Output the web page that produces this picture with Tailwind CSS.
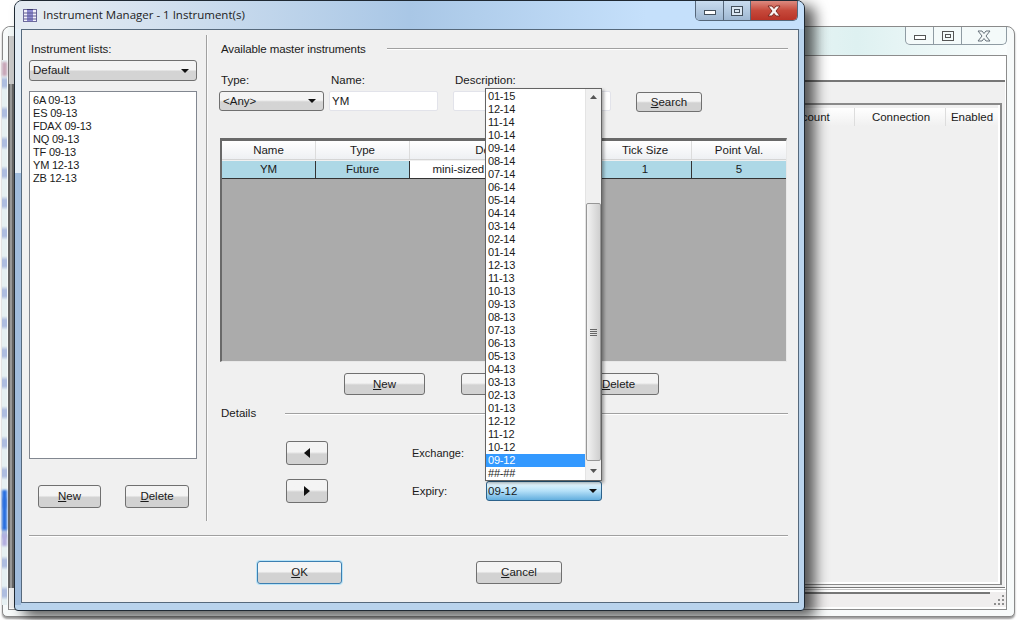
<!DOCTYPE html>
<html lang="en">
<head>
  <meta charset="UTF-8" />
  <title>Instrument Manager - 1 Instrument(s)</title>
  <script src="https://cdn.jsdelivr.net/npm/@tailwindcss/browser@4"></script>
</head>
<body class="relative w-[1017px] h-[620px] overflow-hidden bg-white font-['Liberation_Sans',sans-serif] text-[11.5px] leading-[13px] text-[#1a1a1a]">

  <!-- window behind -->
  <div class="absolute left-[2px] top-[26px] w-[1013px] h-[591px] rounded-t-[8px] rounded-b-[5px] border border-[#8a8a8a] bg-[#f7fafa] pl-[5px] pr-[7px] pb-[6px] flex flex-col shadow-[0_2px_2px_rgba(0,0,0,0.4)]">
    <div class="h-[28px] flex justify-end shrink-0 bg-gradient-to-r from-[#f3f8f8] from-70% via-[#def1f1] via-85% to-[#fafdfd]">
      <div class="h-[18px] w-[102px] flex rounded-b-[5px] border border-t-0 border-[#8f9ba3] bg-[#f4fafa]">
        <div class="w-[28px] border-r border-[#8f9ba3] flex items-center justify-center"><div class="w-[12px] h-[5px] mt-[3px] border border-[#555] bg-white"></div></div>
        <div class="w-[28px] border-r border-[#8f9ba3] flex items-center justify-center"><div class="w-[12px] h-[10px] border border-[#555] flex items-center justify-center"><div class="w-[6px] h-[4px] border border-[#555]"></div></div></div>
        <div class="flex-1 flex items-center justify-center">
          <svg width="16" height="12" viewBox="0 0 16 12"><path d="M2 1h4l2 2.5L10 1h4l-4 5 4 5h-4L8 8.500 6 11H2l4-5z" fill="#f4f8f8" stroke="#66717a" stroke-width="1"/></svg>
        </div>
      </div>
    </div>
    <div class="flex-1 border border-[#8c8c8c] bg-white flex flex-col">
      <div class="h-[24px] shrink-0"></div>
      <div class="h-[508px] shrink-0 mr-[1px] border-t-2 border-b border-[#777] bg-[#f0f0f0] pt-[21px] pr-[3px] pl-[3px]">
        <div class="h-[482px] border-t-2 border-b border-r-2 border-[#8a8a8a] bg-[#f0f0f0]">
          <div class="h-full border-r-2 border-b-2 border-white">
            <div class="h-[21px] flex justify-end pt-[3px]">
              <div class="w-[97px] h-[18px] pl-[6px] flex items-center justify-center bg-gradient-to-b from-white to-[#f0f0f0] border-r border-[#ddd]">Account</div>
              <div class="w-[91px] h-[18px] pl-[2px] flex items-center justify-center bg-gradient-to-b from-white to-[#f0f0f0] border-r border-[#ddd]">Connection</div>
              <div class="w-[52px] h-[18px] flex items-center justify-center bg-gradient-to-b from-white to-[#f0f0f0]">Enabled</div>
            </div>
          </div>
        </div>
      </div>
      <!-- status bar -->
      <div class="mt-[1px] h-[2px] border-t border-[#c4c4c4]"></div>
      <div class="mt-[1px] flex h-[15px]">
        <div class="flex-1 border-t-2 border-[#777] bg-[#f0eeee]"></div>
        <div class="w-[16px] bg-[#f0eeee] relative">
          <svg class="absolute right-[1px] bottom-[1px]" width="12" height="12" viewBox="0 0 12 12" fill="#8e8e8e"><rect x="9" y="1" width="2" height="2"/><rect x="5" y="5" width="2" height="2"/><rect x="9" y="5" width="2" height="2"/><rect x="1" y="9" width="2" height="2"/><rect x="5" y="9" width="2" height="2"/><rect x="9" y="9" width="2" height="2"/></svg>
        </div>
      </div>
    </div>
  </div>

  <!-- what shows of that window's left edge -->
  <div class="absolute left-[2px] top-[60px] w-[5px] h-[545px] bg-[repeating-linear-gradient(180deg,#e6f0f2_0px,#e6f0f2_16px,#aebddf_20px,#aebddf_26px,#e6f0f2_30px)]"></div>
  <div class="absolute left-[2px] top-[62px] w-[5px] h-[14px] bg-[#c9a7b8] blur-[1px]"></div>
  <div class="absolute left-[2px] top-[490px] w-[5px] h-[40px] bg-[#2a6fe0] blur-[1px]"></div>
  <div class="absolute left-[2px] top-[534px] w-[5px] h-[12px] bg-[#b3aee0] blur-[1px]"></div>
  <div class="absolute left-[8px] top-[36px] w-[6px] h-[48px] border-l border-[#777] bg-[#cbcbcb]"></div>
  <div class="absolute left-[8px] top-[84px] w-[6px] h-[504px] border-x-2 border-[#666] bg-[#9a9a9a]"></div>
  <div class="absolute left-[8px] top-[588px] w-[6px] h-[20px] border-l border-[#888] bg-[#efefef]"></div>

  <!-- main window -->
  <div class="absolute left-[14px] top-0 w-[791px] h-[611px] rounded-t-[8px] rounded-b-[4px] border border-[#1f2933] bg-[#b9d3ec] px-[6px] pb-[6px] flex flex-col shadow-[10px_6px_14px_rgba(0,0,0,0.65)]">
    <div class="absolute left-0 top-[28px] w-[6px] h-[144px] bg-[#e4eef7]"></div>
    <div class="absolute left-0 top-[172px] w-[6px] h-[432px] bg-[#9fbbdc]"></div>

    <!-- title bar -->
    <div class="h-[28px] -mx-[6px] px-[8px] shrink-0 rounded-t-[7px] flex items-start bg-gradient-to-r from-[#e4ebf2] from-5% via-[#a9c7e6] via-50% to-[#c5e0fb] to-80%">
      <svg class="mt-[7px] shrink-0" width="15" height="15" viewBox="0 0 15 15">
        <rect x="0.500" y="1.500" width="13" height="12" fill="#f3f1fa" stroke="#6c6a9c"/>
        <rect x="4" y="2" width="6" height="11" fill="#8d8ad0"/>
        <path d="M1 5h13M1 8h13M1 11h13" stroke="#5a588f" stroke-width="1"/>
        <path d="M4 1.500h6" stroke="#3c3a70"/>
      </svg>
      <span class="ml-[5px] mt-[6px] font-['Open_Sans',sans-serif] text-[11.5px] leading-[16px] text-[#222]">Instrument Manager - 1 Instrument(s)</span>
      <div class="ml-auto mr-[-2px] h-[20px] w-[103px] flex rounded-b-[5px] border border-t-0 border-[#56677a] overflow-hidden">
        <div class="w-[28px] border-r border-[#56677a] bg-gradient-to-b from-[#c9dcef] to-[#9fb8d2] flex items-center justify-center"><div class="w-[12px] h-[5px] mt-[3px] border border-[#44505c] bg-white"></div></div>
        <div class="w-[27px] border-r border-[#56677a] bg-gradient-to-b from-[#c9dcef] to-[#9fb8d2] flex items-center justify-center"><div class="w-[12px] h-[10px] border border-[#44505c] flex items-center justify-center bg-[#dbe7f2]"><div class="w-[6px] h-[4px] border border-[#44505c]"></div></div></div>
        <div class="flex-1 bg-gradient-to-b from-[#dc8a80] via-[#c6493b] to-[#b93327] flex items-center justify-center">
          <svg width="16" height="12" viewBox="0 0 16 12"><path d="M2 1h4l2 2.500L10 1h4l-4 5 4 5h-4L8 8.500 6 11H2l4-5z" fill="#f8f4f2" stroke="#7c2a22" stroke-width="1"/></svg>
        </div>
      </div>
    </div>

    <!-- client area -->
    <div class="relative w-[778px] h-[574px] shrink-0 border border-[#56697c] bg-[#f0f0f0]">

      <div class="flex h-[491px] pt-[5px]">
        <!-- instrument lists -->
        <div class="w-[168px] ml-[7px] pt-[7px] shrink-0">
          <div class="h-[14px] leading-[14px] ml-[2px]">Instrument lists:</div>
          <div class="mt-[4px] h-[21px] pl-[3px] pr-[7px] flex items-center justify-between border border-[#707070] rounded-[3px] bg-gradient-to-b from-[#f4f4f4] from-45% to-[#d4d4d4] to-55%">
            <span>Default</span>
            <svg width="8" height="4" viewBox="0 0 8 4"><path d="M0 0h8L4 4z" fill="#111"/></svg>
          </div>
          <div class="mt-[10px] h-[368px] border border-[#828790] bg-white pl-[3px] pt-[2px] text-[11px] tracking-[-0.2px]">
            <div>6A 09-13</div>
            <div>ES 09-13</div>
            <div>FDAX 09-13</div>
            <div>NQ 09-13</div>
            <div>TF 09-13</div>
            <div>YM 12-13</div>
            <div>ZB 12-13</div>
          </div>
          <div class="mt-[26px] ml-[9px] flex gap-[24px]">
            <button class="w-[63px] h-[23px] border border-[#707070] rounded-[3px] bg-gradient-to-b from-[#f4f4f4] from-45% to-[#d2d2d2] to-55%"><u>N</u>ew</button>
            <button class="w-[64px] h-[23px] border border-[#707070] rounded-[3px] bg-gradient-to-b from-[#f4f4f4] from-45% to-[#d2d2d2] to-55%"><u>D</u>elete</button>
          </div>
        </div>

        <div class="ml-[9px] w-[2px] h-[486px] shrink-0 border-l border-[#a0a0a0] bg-[#fafafa]"></div>

        <!-- master instruments -->
        <div class="ml-[11px] w-[569px] pt-[7px] shrink-0">
          <div class="flex items-center h-[14px] pl-[2px]">
            <span class="w-[166px] leading-[14px] tracking-[-0.1px]">Available master instruments</span>
            <div class="flex-1 h-[2px] border-t border-[#a0a0a0] bg-white"></div>
          </div>

          <div class="mt-[17px] flex">
            <div class="w-[105px]">
              <div class="h-[18px] leading-[14px] ml-[2px]">Type:</div>
              <div class="h-[20px] pl-[3px] pr-[7px] flex items-center justify-between border border-[#707070] rounded-[3px] bg-gradient-to-b from-[#f4f4f4] from-45% to-[#d4d4d4] to-55%">
                <span>&lt;Any&gt;</span>
                <svg width="8" height="4" viewBox="0 0 8 4"><path d="M0 0h8L4 4z" fill="#111"/></svg>
              </div>
            </div>
            <div class="ml-[5px] w-[109px]">
              <div class="h-[18px] leading-[14px] ml-[2px]">Name:</div>
              <div class="h-[20px] px-[2px] flex items-center border border-[#e2e3ea] rounded-[2px] bg-white">YM</div>
            </div>
            <div class="ml-[15px] w-[158px]">
              <div class="h-[18px] leading-[14px] ml-[2px]">Description:</div>
              <div class="h-[20px] border border-[#e2e3ea] rounded-[2px] bg-white"></div>
            </div>
            <button class="ml-[25px] mt-[19px] w-[66px] h-[20px] border border-[#707070] rounded-[3px] bg-gradient-to-b from-[#f4f4f4] from-45% to-[#d2d2d2] to-55%"><u>S</u>earch</button>
          </div>

          <!-- instruments grid -->
          <div class="mt-[26px] ml-[1px] w-[567px] h-[224px] border-t-[3px] border-l-2 border-[#696969] border-r border-b border-r-[#e8e8e8] border-b-[#e8e8e8] bg-[#ababab]">
            <div class="flex h-[19px] bg-gradient-to-b from-white to-[#eef0f3] border-b border-[#d5d5d5]">
              <div class="w-[94px] border-r border-[#dcdcdc] flex items-center justify-center">Name</div>
              <div class="w-[94px] border-r border-[#dcdcdc] flex items-center justify-center">Type</div>
              <div class="w-[189px] border-r border-[#dcdcdc] flex items-center justify-center">Description</div>
              <div class="w-[93px] border-r border-[#dcdcdc] flex items-center justify-center">Tick Size</div>
              <div class="w-[94px] flex items-center justify-center">Point Val.</div>
            </div>
            <div class="flex h-[19px] bg-[#add8e6] border-y border-[#333] border-t-[#f0f0f0]">
              <div class="w-[94px] border-r border-[#333] flex items-center justify-center">YM</div>
              <div class="w-[94px] border-r border-[#333] flex items-center justify-center">Future</div>
              <div class="w-[189px] border-r border-[#333] flex items-center justify-center bg-white">mini-sized Dow Jones Index</div>
              <div class="w-[93px] border-r border-[#333] flex items-center justify-center">1</div>
              <div class="w-[94px] flex items-center justify-center">5</div>
            </div>
          </div>

          <div class="mt-[11px] ml-[125px] flex">
            <button class="w-[81px] h-[22px] border border-[#707070] rounded-[3px] bg-gradient-to-b from-[#f4f4f4] from-45% to-[#d2d2d2] to-55%"><u>N</u>ew</button>
            <button class="ml-[36px] w-[80px] h-[22px] border border-[#707070] rounded-[3px] bg-gradient-to-b from-[#f4f4f4] from-45% to-[#d2d2d2] to-55%"><u>E</u>dit</button>
            <button class="ml-[37px] w-[81px] h-[22px] border border-[#707070] rounded-[3px] bg-gradient-to-b from-[#f4f4f4] from-45% to-[#d2d2d2] to-55%"><u>D</u>elete</button>
          </div>

          <!-- details -->
          <div class="mt-[11px] flex items-center h-[14px] pl-[2px]">
            <span class="w-[64px] leading-[14px]">Details</span>
            <div class="flex-1 h-[2px] mt-[2px] border-t border-[#a0a0a0] bg-white"></div>
          </div>

          <div class="mt-[21px] ml-[67px] flex items-center h-[24px]">
            <button class="w-[42px] h-[24px] flex items-center justify-center border border-[#707070] rounded-[3px] bg-gradient-to-b from-[#f4f4f4] from-45% to-[#d2d2d2] to-55%">
              <svg width="6" height="10" viewBox="0 0 6 10"><path d="M6 0v10L0 5z" fill="#111"/></svg>
            </button>
            <span class="ml-[84px] w-[74px] text-[11px]">Exchange:</span>
            <div class="w-[116px] h-[20px] border border-[#707070] rounded-[3px] bg-[#e8e8e8]"></div>
          </div>
          <div class="mt-[14px] ml-[67px] flex items-center h-[24px]">
            <button class="w-[42px] h-[24px] flex items-center justify-center border border-[#707070] rounded-[3px] bg-gradient-to-b from-[#f4f4f4] from-45% to-[#d2d2d2] to-55%">
              <svg width="6" height="10" viewBox="0 0 6 10"><path d="M0 0v10l6-5z" fill="#111"/></svg>
            </button>
            <span class="ml-[84px] w-[74px]">Expiry:</span>
            <div class="w-[116px] h-[20px] pl-[1px] pr-[3px] flex items-center justify-between border border-[#2c628b] rounded-[3px] bg-gradient-to-b from-[#e5f5fd] from-10% via-[#b4e0f8] via-50% to-[#62aede]">
              <span>09-12</span>
              <svg class="mr-[1px]" width="8" height="4" viewBox="0 0 8 4"><path d="M0 0h8L4 4z" fill="#111"/></svg>
            </div>
          </div>
        </div>
      </div>

      <!-- bottom buttons -->
      <div class="ml-[7px] mr-[10px] mt-[14px] h-[2px] border-t border-[#a0a0a0] bg-white"></div>
      <div class="mt-[24px] flex">
        <button class="ml-[235px] w-[85px] h-[23px] border border-[#3c7fb1] rounded-[3px] shadow-[0_0_0_1px_#b9e4f8] bg-gradient-to-b from-[#f4f4f4] from-45% to-[#d2d2d2] to-55%"><u>O</u>K</button>
        <button class="ml-[134px] w-[86px] h-[23px] border border-[#707070] rounded-[3px] bg-gradient-to-b from-[#f4f4f4] from-45% to-[#d2d2d2] to-55%"><u>C</u>ancel</button>
      </div>

      <!-- expiry dropdown, open -->
      <div class="absolute left-[463px] top-[58px] w-[117px] h-[393px] flex border border-[#646464] bg-white shadow-[2px_2px_3px_rgba(0,0,0,0.35)] text-[11px] tracking-[-0.2px]">
        <div class="w-[99px] shrink-0 pt-[1px]">
          <div class="h-[13px] pl-[2px]">01-15</div>
          <div class="h-[13px] pl-[2px]">12-14</div>
          <div class="h-[13px] pl-[2px]">11-14</div>
          <div class="h-[13px] pl-[2px]">10-14</div>
          <div class="h-[13px] pl-[2px]">09-14</div>
          <div class="h-[13px] pl-[2px]">08-14</div>
          <div class="h-[13px] pl-[2px]">07-14</div>
          <div class="h-[13px] pl-[2px]">06-14</div>
          <div class="h-[13px] pl-[2px]">05-14</div>
          <div class="h-[13px] pl-[2px]">04-14</div>
          <div class="h-[13px] pl-[2px]">03-14</div>
          <div class="h-[13px] pl-[2px]">02-14</div>
          <div class="h-[13px] pl-[2px]">01-14</div>
          <div class="h-[13px] pl-[2px]">12-13</div>
          <div class="h-[13px] pl-[2px]">11-13</div>
          <div class="h-[13px] pl-[2px]">10-13</div>
          <div class="h-[13px] pl-[2px]">09-13</div>
          <div class="h-[13px] pl-[2px]">08-13</div>
          <div class="h-[13px] pl-[2px]">07-13</div>
          <div class="h-[13px] pl-[2px]">06-13</div>
          <div class="h-[13px] pl-[2px]">05-13</div>
          <div class="h-[13px] pl-[2px]">04-13</div>
          <div class="h-[13px] pl-[2px]">03-13</div>
          <div class="h-[13px] pl-[2px]">02-13</div>
          <div class="h-[13px] pl-[2px]">01-13</div>
          <div class="h-[13px] pl-[2px]">12-12</div>
          <div class="h-[13px] pl-[2px]">11-12</div>
          <div class="h-[13px] pl-[2px]">10-12</div>
          <div class="h-[13px] pl-[2px] bg-[#3399ff] text-white">09-12</div>
          <div class="h-[13px] pl-[2px]">##-##</div>
        </div>
        <!-- scrollbar -->
        <div class="flex-1 flex flex-col items-center bg-[#f0f0f0] border-l border-[#e4e4e4]">
          <svg class="mt-[6px] shrink-0" width="7" height="4" viewBox="0 0 7 4"><path d="M0 4h7L3.500 0z" fill="#555"/></svg>
          <div class="mt-[104px] w-[15px] h-[258px] rounded-[2px] border border-[#979797] bg-gradient-to-r from-[#f3f3f3] to-[#cfcfcf] flex flex-col items-center justify-center gap-[1px]">
            <div class="w-[7px] h-[1px] bg-[#666]"></div>
            <div class="w-[7px] h-[1px] bg-[#666]"></div>
            <div class="w-[7px] h-[1px] bg-[#666]"></div>
            <div class="w-[7px] h-[1px] bg-[#666]"></div>
          </div>
          <svg class="mt-[8px] shrink-0" width="7" height="4" viewBox="0 0 7 4"><path d="M0 0h7L3.500 4z" fill="#555"/></svg>
        </div>
      </div>
    </div>
  </div>
</body>
</html>
